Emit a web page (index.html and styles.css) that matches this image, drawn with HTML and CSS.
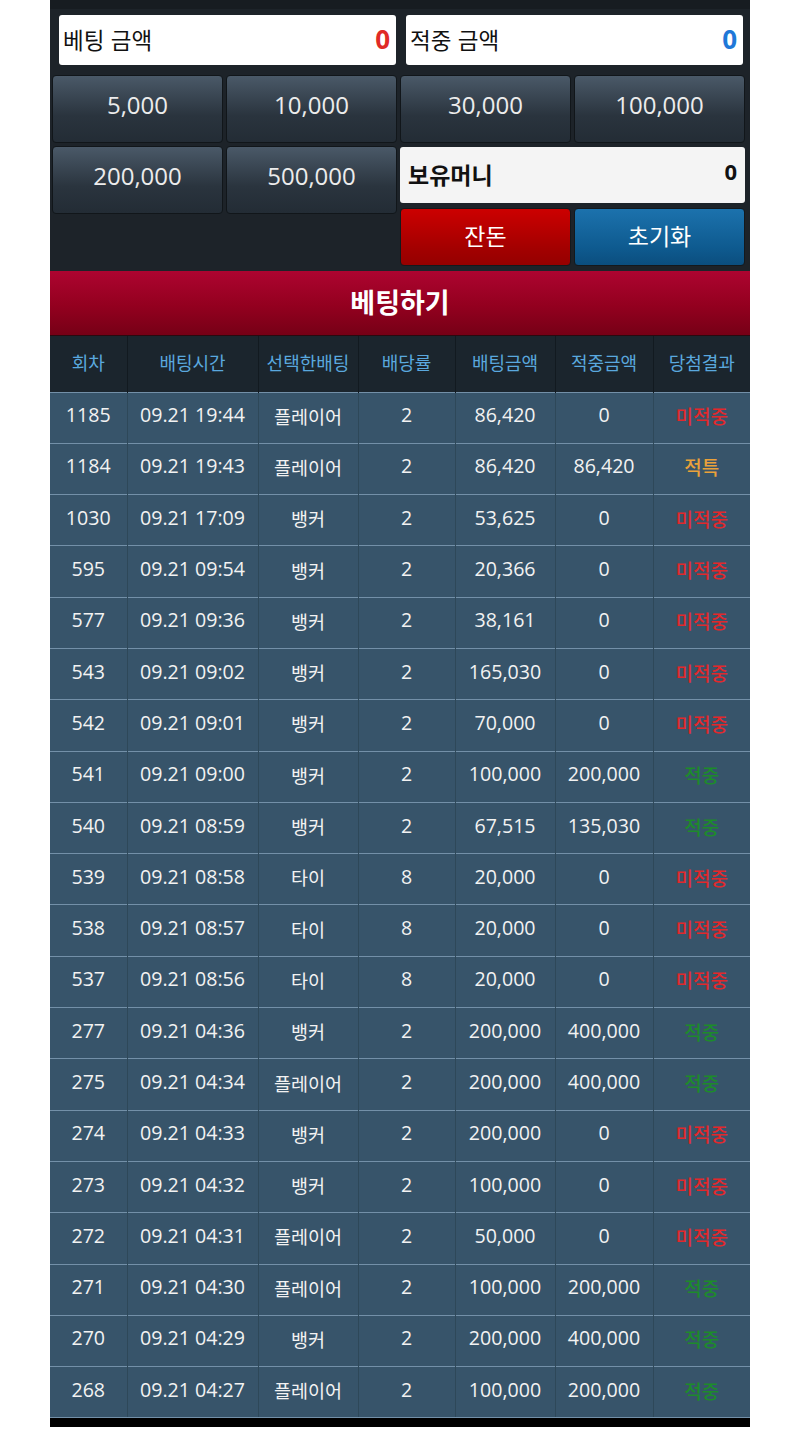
FILE: index.html
```html
<!DOCTYPE html>
<html lang="ko">
<head>
<meta charset="utf-8">
<title>베팅</title>
<link rel="stylesheet" href="styles.css">
</head>
<body>
<div class="wrap">
  <div class="panel">
    <div class="amounts">
      <div class="amount"><span class="label">베팅 금액</span><span class="val red">0</span></div>
      <div class="amount"><span class="label">적중 금액</span><span class="val blue">0</span></div>
    </div>
    <div class="chips">
      <button class="chip">5,000</button>
      <button class="chip">10,000</button>
      <button class="chip">30,000</button>
      <button class="chip">100,000</button>
    </div>
    <div class="lower">
      <div class="chips2">
        <button class="chip">200,000</button>
        <button class="chip">500,000</button>
      </div>
      <div class="side">
        <div class="money"><span class="mlabel">보유머니</span><span class="mval">0</span></div>
        <div class="actions">
          <button class="act change">잔돈</button>
          <button class="act reset">초기화</button>
        </div>
      </div>
    </div>
  </div>
  <button class="betbtn">베팅하기</button>
  <table class="hist">
    <colgroup>
      <col class="c1"><col class="c2"><col class="c3"><col class="c4"><col class="c5"><col class="c6"><col class="c7">
    </colgroup>
    <thead>
      <tr><th>회차</th><th>배팅시간</th><th>선택한배팅</th><th>배당률</th><th>배팅금액</th><th>적중금액</th><th>당첨결과</th></tr>
    </thead>
    <tbody>
      <tr><td>1185</td><td>09.21 19:44</td><td class="ko">플레이어</td><td>2</td><td>86,420</td><td>0</td><td class="res lose">미적중</td></tr>
      <tr><td>1184</td><td>09.21 19:43</td><td class="ko">플레이어</td><td>2</td><td>86,420</td><td>86,420</td><td class="res tie">적특</td></tr>
      <tr><td>1030</td><td>09.21 17:09</td><td class="ko">뱅커</td><td>2</td><td>53,625</td><td>0</td><td class="res lose">미적중</td></tr>
      <tr><td>595</td><td>09.21 09:54</td><td class="ko">뱅커</td><td>2</td><td>20,366</td><td>0</td><td class="res lose">미적중</td></tr>
      <tr><td>577</td><td>09.21 09:36</td><td class="ko">뱅커</td><td>2</td><td>38,161</td><td>0</td><td class="res lose">미적중</td></tr>
      <tr><td>543</td><td>09.21 09:02</td><td class="ko">뱅커</td><td>2</td><td>165,030</td><td>0</td><td class="res lose">미적중</td></tr>
      <tr><td>542</td><td>09.21 09:01</td><td class="ko">뱅커</td><td>2</td><td>70,000</td><td>0</td><td class="res lose">미적중</td></tr>
      <tr><td>541</td><td>09.21 09:00</td><td class="ko">뱅커</td><td>2</td><td>100,000</td><td>200,000</td><td class="res win">적중</td></tr>
      <tr><td>540</td><td>09.21 08:59</td><td class="ko">뱅커</td><td>2</td><td>67,515</td><td>135,030</td><td class="res win">적중</td></tr>
      <tr><td>539</td><td>09.21 08:58</td><td class="ko">타이</td><td>8</td><td>20,000</td><td>0</td><td class="res lose">미적중</td></tr>
      <tr><td>538</td><td>09.21 08:57</td><td class="ko">타이</td><td>8</td><td>20,000</td><td>0</td><td class="res lose">미적중</td></tr>
      <tr><td>537</td><td>09.21 08:56</td><td class="ko">타이</td><td>8</td><td>20,000</td><td>0</td><td class="res lose">미적중</td></tr>
      <tr><td>277</td><td>09.21 04:36</td><td class="ko">뱅커</td><td>2</td><td>200,000</td><td>400,000</td><td class="res win">적중</td></tr>
      <tr><td>275</td><td>09.21 04:34</td><td class="ko">플레이어</td><td>2</td><td>200,000</td><td>400,000</td><td class="res win">적중</td></tr>
      <tr><td>274</td><td>09.21 04:33</td><td class="ko">뱅커</td><td>2</td><td>200,000</td><td>0</td><td class="res lose">미적중</td></tr>
      <tr><td>273</td><td>09.21 04:32</td><td class="ko">뱅커</td><td>2</td><td>100,000</td><td>0</td><td class="res lose">미적중</td></tr>
      <tr><td>272</td><td>09.21 04:31</td><td class="ko">플레이어</td><td>2</td><td>50,000</td><td>0</td><td class="res lose">미적중</td></tr>
      <tr><td>271</td><td>09.21 04:30</td><td class="ko">플레이어</td><td>2</td><td>100,000</td><td>200,000</td><td class="res win">적중</td></tr>
      <tr><td>270</td><td>09.21 04:29</td><td class="ko">뱅커</td><td>2</td><td>200,000</td><td>400,000</td><td class="res win">적중</td></tr>
      <tr><td>268</td><td>09.21 04:27</td><td class="ko">플레이어</td><td>2</td><td>100,000</td><td>200,000</td><td class="res win">적중</td></tr>
    </tbody>
  </table>
  <div class="foot"></div>
</div>
</body>
</html>
```

FILE: styles.css
```css
* { box-sizing: border-box; }
html, body { margin: 0; padding: 0; background: #ffffff; }
body {
  font-family: "Open Sans", "Noto Sans CJK KR", sans-serif;
}
.wrap {
  width: 700px;
  margin: 0 auto;
}
.panel {
  background: #1d2329;
  border-top: 9px solid #171c21;
  padding: 6px 5px 5px 2px;
}
.amounts {
  display: flex;
  gap: 10px;
  padding: 0 2px 0 7px;
}
.amount {
  flex: 1;
  height: 50px;
  background: #ffffff;
  border-radius: 3px;
  display: flex;
  align-items: center;
  justify-content: space-between;
  padding: 0 6px 2px 4px;
}
.label {
  font-family: "Noto Sans CJK KR", sans-serif;
  font-size: 22.5px;
  color: #111;
  line-height: 1;
}
.val {
  font-family: "Open Sans", sans-serif;
  font-weight: 700;
  font-size: 26px;
  line-height: 1;
}
.red { color: #e02a26; }
.blue { color: #1f78d8; }

.chips {
  display: grid;
  grid-template-columns: repeat(4, 1fr);
  gap: 3px;
  margin-top: 10px;
}
.chip {
  height: 68px;
  border: 1px solid #11161a;
  border-radius: 4px;
  background: linear-gradient(#4a5968, #2a343e 60%, #232c35);
  color: #ececec;
  font-family: "Open Sans", sans-serif;
  font-size: 24px;
  cursor: pointer;
  padding: 0 0 9px 0;
}
.lower {
  display: flex;
  gap: 3px;
  margin-top: 3px;
}
.chips2 {
  flex: 1;
  display: grid;
  grid-template-columns: 1fr 1fr;
  gap: 3px;
  align-self: flex-start;
}
.side {
  flex: 1;
  display: flex;
  flex-direction: column;
  gap: 5px;
  padding-top: 1px;
}
.money {
  height: 56px;
  background: #f4f4f4;
  border-radius: 3px;
  display: flex;
  align-items: center;
  justify-content: space-between;
  padding: 0 8px 2px 8px;
}
.mlabel {
  font-family: "Noto Sans CJK KR", sans-serif;
  font-weight: 700;
  font-size: 23px;
  color: #111;
}
.mval {
  font-family: "Open Sans", sans-serif;
  font-weight: 700;
  font-size: 22px;
  color: #111;
  margin-top: -6px;
}
.actions {
  display: grid;
  grid-template-columns: 1fr 1fr;
  gap: 3px;
}
.act {
  height: 58px;
  border: 1px solid #14191d;
  border-radius: 4px;
  color: #ffffff;
  font-family: "Noto Sans CJK KR", sans-serif;
  font-size: 23px;
  padding: 0 0 5px 0;
  cursor: pointer;
}
.change { background: linear-gradient(#cc0000, #a30000 70%, #950000); }
.reset { background: linear-gradient(#1c72ad, #0e5a8f 70%, #0b4e7e); }

.betbtn {
  display: block;
  width: 100%;
  height: 65px;
  border: none;
  border-bottom: 1px solid #2a0a10;
  background: linear-gradient(#ad0430, #93001f 55%, #760016);
  color: #ffffff;
  font-family: "Noto Sans CJK KR", sans-serif;
  font-weight: 700;
  font-size: 27px;
  padding: 0 0 4px 0;
  cursor: pointer;
}

.hist {
  width: 100%;
  border-collapse: collapse;
  table-layout: fixed;
}
.c1 { width: 77px; }
.c2 { width: 131px; }
.c3 { width: 100px; }
.c4 { width: 97px; }
.c5 { width: 100px; }
.c6 { width: 98px; }
.c7 { width: 97px; }
.hist th {
  height: 56px;
  background: #1b252d;
  color: #5aa8de;
  font-family: "Noto Sans CJK KR", sans-serif;
  font-weight: 400;
  font-size: 18px;
  border-left: 1px solid #121a20;
  padding: 0 0 4px 0;
}
.hist th:first-child { border-left: none; }
.hist td {
  height: 51.3px;
  background: #37546a;
  color: #f2f2f2;
  font-size: 19.6px;
  text-align: center;
  border-top: 1px solid #7390a8;
  border-left: 1px solid #2e4859;
  padding: 0 0 6px 0;
}
.hist td:first-child { border-left: none; }
.hist tbody tr:last-child td { border-bottom: 1px solid #7390a8; }
.hist td.ko {
  font-family: "Noto Sans CJK KR", sans-serif;
  font-size: 18.5px;
  padding: 0 0 4px 0;
}
.hist td.res {
  font-family: "Noto Sans CJK KR", sans-serif;
  font-size: 19px;
  font-weight: 500;
  padding: 0 0 4px 0;
}
.lose { color: #e2282c !important; }
.tie { color: #eaa13a !important; }
.win { color: #1d8b2b !important; }
.foot {
  height: 9px;
  background: #000000;
}
```
